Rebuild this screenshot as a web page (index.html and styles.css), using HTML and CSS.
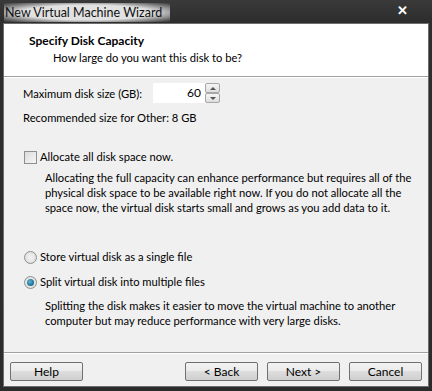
FILE: index.html
```html
<!DOCTYPE html>
<html lang="en">
<head>
    <meta charset="UTF-8">
    <title>New Virtual Machine Wizard</title>
    <link rel="stylesheet" href="styles.css">
</head>
<body>
    <div class="window">
        <div class="titlebar">
            <span class="title">New Virtual Machine Wizard</span>
            <span class="close">&#x2715;</span>
        </div>
        <div class="client">
            <div class="header">
                <div class="header-title">Specify Disk Capacity</div>
                <div class="header-sub">How large do you want this disk to be?</div>
            </div>
            <div class="content">
                <div class="size-row">
                    <span class="size-label">Maximum disk size (GB):</span>
                    <div class="spinner">
                        <span class="spin-value">60</span>
                        <div class="spin-btns">
                            <div class="spin-btn"><span class="arrow-up"></span></div>
                            <div class="spin-btn"><span class="arrow-down"></span></div>
                        </div>
                    </div>
                </div>
                <div class="recommend">Recommended size for Other: 8 GB</div>

                <label class="option check-option">
                    <span class="checkbox"></span>
                    Allocate all disk space now.
                </label>
                <p class="note">Allocating the full capacity can enhance performance but requires all of the physical disk space to be available right now. If you do not allocate all the space now, the virtual disk starts small and grows as you add data to it.</p>

                <label class="option radio-first">
                    <span class="radio"></span>
                    Store virtual disk as a single file
                </label>
                <label class="option radio-second">
                    <span class="radio checked"></span>
                    Split virtual disk into multiple files
                </label>
                <p class="note split-note">Splitting the disk makes it easier to move the virtual machine to another computer but may reduce performance with very large disks.</p>
            </div>
            <div class="footer">
                <button class="btn">Help</button>
                <div class="spacer"></div>
                <button class="btn">&lt; Back</button>
                <button class="btn">Next &gt;</button>
                <button class="btn">Cancel</button>
            </div>
        </div>
    </div>
</body>
</html>
```

FILE: styles.css
```css
body {
    margin: 0;
    background: #2b2b2b;
    font-family: Lato, "Noto Sans", sans-serif;
    font-size: 11.2px;
    color: #000;
}

.window {
    width: 432px;
    height: 391px;
    display: flex;
    flex-direction: column;
    background: linear-gradient(#3a3a3a, #2e2e2e 20px, #2b2b2b);
    box-sizing: border-box;
    padding: 0 3px 4px 3px;
}

.titlebar {
    height: 23px;
    display: flex;
    align-items: center;
    justify-content: space-between;
    padding-left: 1px;
}

.title {
    font-size: 12.5px;
    color: #111;
    background: radial-gradient(ellipse at center, rgba(235,235,235,0.95) 55%, rgba(200,200,200,0.5) 80%, rgba(80,80,80,0) 100%);
    padding: 2px 8px 2px 1px;
    margin-top: 1px;
}

.close {
    color: #fff;
    font-weight: bold;
    font-size: 13px;
    margin-right: 21px;
    margin-bottom: 4px;
}

.client {
    flex: 1;
    display: flex;
    flex-direction: column;
    background: #f0f0f0;
    border: 1px solid #6e6e6e;
}

.header {
    height: 53px;
    background: #fff;
    border-bottom: 1px solid #a0a0a0;
    box-sizing: border-box;
    padding: 9px 0 0 25px;
}

.header-title {
    font-weight: bold;
    font-size: 12px;
    line-height: 16px;
}

.header-sub {
    padding-left: 24px;
    line-height: 16px;
    margin-top: 1px;
}

.content {
    flex: 1;
    padding: 5px 0 0 19px;
    border-top: 1px solid #fff;
}

.size-row {
    display: flex;
    align-items: center;
    height: 20px;
}

.size-label {
    width: 130px;
    flex-shrink: 0;
    white-space: nowrap;
}

.spinner {
    display: flex;
    height: 20px;
}

.spin-value {
    width: 48px;
    background: #fff;
    text-align: right;
    padding-right: 4px;
    line-height: 20px;
    font-size: 12px;
}

.spin-btns {
    display: flex;
    flex-direction: column;
    width: 15px;
}

.spin-btn {
    flex: 1;
    border: 1px solid #a8a8a8;
    border-radius: 2px;
    background: linear-gradient(#f6f6f6, #dedede);
    display: flex;
    align-items: center;
    justify-content: center;
}

.arrow-up, .arrow-down {
    width: 0;
    height: 0;
    border-left: 3px solid transparent;
    border-right: 3px solid transparent;
}

.arrow-up {
    border-bottom: 3px solid #555;
}

.arrow-down {
    border-top: 3px solid #555;
}

.recommend {
    margin-top: 7px;
    line-height: 16px;
}

.option {
    display: flex;
    align-items: center;
    gap: 3px;
    line-height: 16px;
}

.check-option {
    margin-top: 23px;
}

.checkbox {
    width: 11px;
    height: 11px;
    border: 1px solid #8e8f8f;
    background: linear-gradient(135deg, #dcdcdc, #f6f6f6);
    margin-left: 1px;
}

.radio {
    width: 11px;
    height: 11px;
    border: 1px solid #8e8f8f;
    border-radius: 50%;
    background: radial-gradient(circle, #f4f4f4, #d8d8d8);
    margin-left: 1px;
    display: flex;
    align-items: center;
    justify-content: center;
}

.radio.checked::after {
    content: "";
    width: 7px;
    height: 7px;
    border-radius: 50%;
    background: radial-gradient(circle at 40% 40%, #5fb6d4, #176a8c 70%);
}

.note {
    margin: 5px 14px 0 22px;
    line-height: 15px;
}

.split-note {
    margin-top: 8px;
}

.radio-first {
    margin-top: 34px;
}

.radio-second {
    margin-top: 9px;
}

.footer {
    height: 33px;
    border-top: 1px solid #a0a0a0;
    display: flex;
    align-items: center;
    gap: 9px;
    padding: 0 6px 0 6px;
    box-shadow: inset 0 1px 0 #fff;
}

.spacer {
    flex: 1;
}

.btn {
    width: 73px;
    height: 19px;
    font-family: inherit;
    font-size: 12px;
    border: 1px solid #707070;
    border-radius: 2px;
    background: linear-gradient(#f2f2f2, #ebebeb 45%, #dddddd 50%, #cfcfcf);
    padding: 0;
    margin-top: 4px;
}
```
